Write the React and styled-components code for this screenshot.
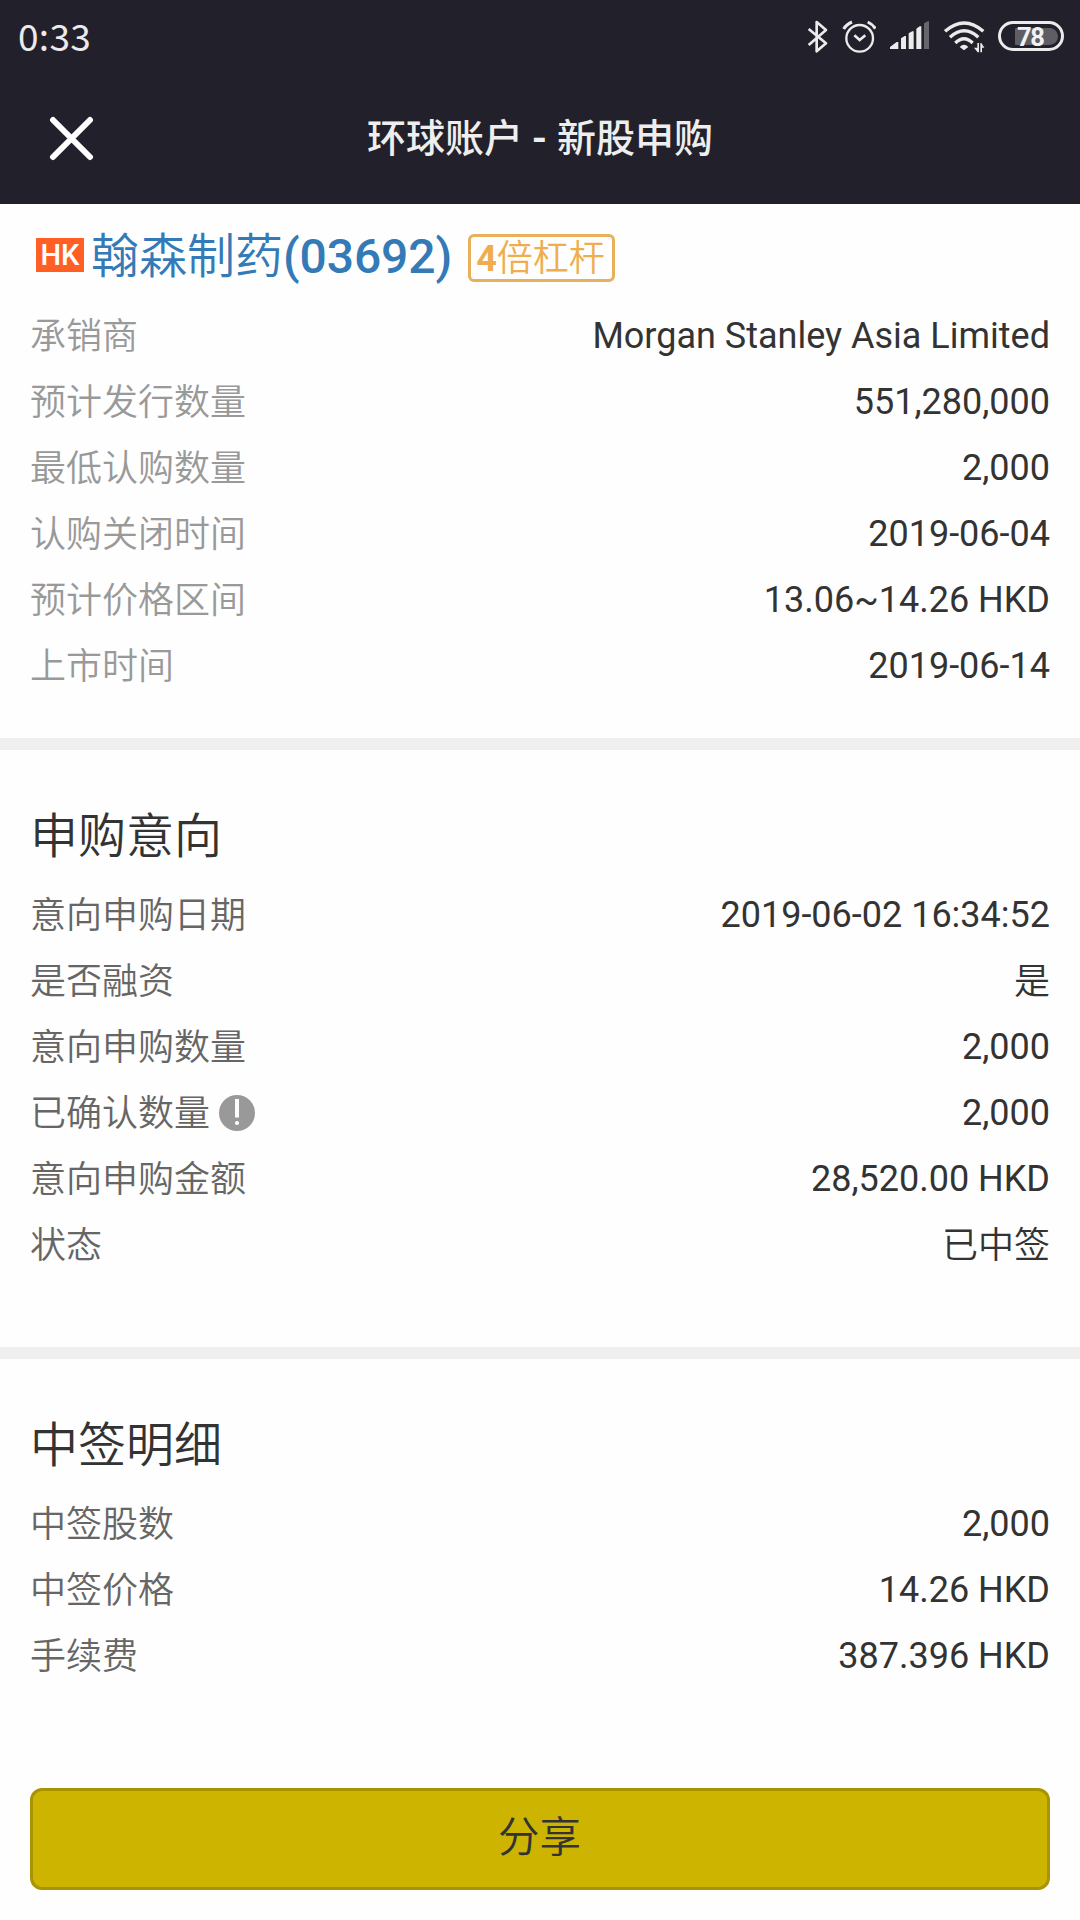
import React from "react";
import styled, { createGlobalStyle } from "styled-components";

const GlobalStyle = createGlobalStyle`
  body {
    margin: 0;
    background: #fefefe;
    font-family: Roboto, "Noto Sans CJK SC DemiLight", "Noto Sans CJK SC", sans-serif;
  }
  * { box-sizing: border-box; }
`;

const Screen = styled.div`
  width: 1080px;
  height: 1920px;
  display: flex;
  flex-direction: column;
  background: #fefefe;
  color: #333;
  overflow: hidden;
`;

const Header = styled.header`
  height: 204px;
  flex: none;
  background: #22212b;
`;

const StatusBar = styled.div`
  height: 72px;
  display: flex;
  justify-content: space-between;
  padding: 0 16px 0 18px;
`;

const Clock = styled.span`
  height: 72px;
  line-height: 71px;
  font-family: "Noto Sans CJK SC", sans-serif;
  font-size: 37px;
  letter-spacing: 0.3px;
  color: #ebebeb;
`;

const StatusIcons = styled.div`
  display: flex;
  align-items: flex-start;
  padding-top: 20px;
`;

const Glyph = styled.svg`
  display: block;
  width: ${(p) => p.$w}px;
  height: 34px;
  margin-right: ${(p) => p.$gap}px;
`;

const Battery = styled.div`
  width: 66px;
  height: 30px;
  margin-top: 1px;
  padding: 0 3px 0 14px;
  display: flex;
  align-items: center;
  border: 3px solid #ebebeb;
  border-radius: 15px;
`;

const Level = styled.div`
  width: 43px;
  height: 17px;
  padding-left: 2px;
  line-height: 18px;
  border-radius: 1px 9px 9px 1px;
  background: #5f5e65;
  color: #f2f2f2;
  font-size: 25.5px;
  font-weight: 700;
  letter-spacing: -1.5px;
`;

const TitleBar = styled.div`
  height: 132px;
  display: grid;
  grid-template-columns: 142px 1fr 142px;
  align-items: center;
`;

const Close = styled.button`
  height: 132px;
  padding: 0 0 0 49px;
  border: 0;
  background: none;
  display: flex;
  align-items: center;
`;

const Title = styled.h1`
  margin: 0;
  padding-bottom: 2px;
  text-align: center;
  font-family: "Noto Sans CJK SC", sans-serif;
  font-size: 39px;
  line-height: 60px;
  font-weight: 500;
  color: #eee;
`;

const Dash = styled.span`
  font-family: Roboto, sans-serif;
  font-weight: 700;
  margin: 0 1px 0 0;
`;

const Section = styled.section`
  height: ${(p) => p.$h}px;
  flex: none;
  padding: ${(p) => p.$top}px 30px 0;
  border-bottom: ${(p) => (p.$last ? "0" : "12px solid #efefef")};
`;

const Stock = styled.div`
  height: 74px;
  display: flex;
  align-items: center;
  margin-bottom: 8px;
  padding-left: 6px;
`;

const Market = styled.span`
  width: 48px;
  height: 34px;
  margin: 0 7px 6px 0;
  background: #ff5f24;
  color: #fff;
  font-size: 29px;
  font-weight: 500;
  line-height: 34px;
  text-align: center;
`;

const StockName = styled.a`
  color: #337ab7;
  font-size: 48px;
  line-height: 74px;
  margin-top: -2px;
  white-space: nowrap;
  font-weight: 350;
`;

const Code = styled.span`
  font-weight: 500;
  letter-spacing: -0.1px;
`;

const Leverage = styled.span`
  height: 48px;
  width: 147px;
  margin: 0 0 1px 16px;
  padding-left: 5px;
  border: 3px solid #e8b05c;
  border-radius: 6px;
  color: #f0ad4e;
  font-size: 36px;
  line-height: 44px;
  font-weight: 350;
  white-space: nowrap;
`;

const Times = styled.b`
  font-weight: 700;
`;

const Heading = styled.h2`
  margin: 0 0 12px;
  font-size: 48px;
  line-height: 66px;
  font-weight: 350;
  color: #333;
`;

const Row = styled.div`
  height: 66px;
  display: flex;
  justify-content: space-between;
  line-height: 66px;
  font-size: 36px;
`;

const Label = styled.span`
  display: flex;
  align-items: center;
  gap: 9px;
  color: ${(p) => (p.$muted ? "#999" : "#666")};
  font-weight: 350;
`;

const LabelText = styled.span`
  padding-top: 2px;
`;

const Value = styled.span`
  color: #333;
  font-weight: ${(p) => (p.$light ? 350 : 400)};
  line-height: ${(p) => (p.$light ? 68 : 66)}px;
`;

const ShareButton = styled.button`
  width: 1020px;
  height: 102px;
  flex: none;
  margin: 0 30px;
  padding: 0 1px 10px 0;
  border: 3px solid #a89400;
  border-radius: 12px;
  background: #ccb400;
  color: #333;
  font-family: inherit;
  font-size: 41.5px;
  font-weight: 350;
`;

const ink = "#ebebeb";

function BluetoothIcon() {
  return (
    <Glyph $w={22} $gap={13} viewBox="81 60 66 102">
      <path d="M86 87 L138 130 L110 154 V66 L138 90 L86 135" fill="none" stroke={ink} strokeWidth="8" strokeLinejoin="round" />
    </Glyph>
  );
}

function AlarmIcon() {
  return (
    <Glyph $w={34} $gap={13} viewBox="186 60 102 102">
      <g fill="none" stroke={ink}>
        <circle cx="239" cy="115" r="40" strokeWidth="7" />
        <path d="M191 87 Q199 73 216 66 M263 66 Q279 73 286 86" strokeWidth="9" />
        <path d="M223 106 L239 120 L256 106" strokeWidth="8" />
      </g>
    </Glyph>
  );
}

function SignalIcon() {
  return (
    <Glyph $w={40} $gap={14} viewBox="327 60 120 102">
      <path fill={ink} d="M330 147 V141 L350 126 H355 V147Z M363 147 V115 L374 108 H378 V147Z M386 147 V100 L397 94 H401 V147Z M409 147 V86 L419 79 H424 V147Z" />
      <path fill="#67666d" d="M432 147 V70 L443 64 H447 V147Z" />
    </Glyph>
  );
}

function WifiIcon() {
  return (
    <Glyph $w={42} $gap={13} viewBox="488 60 126 102">
      <g fill="none" stroke={ink} strokeWidth="10">
        <path d="M494 94 Q552 44 609 94" />
        <path d="M509 112 Q552 73 594 112" />
        <path d="M525 129 Q551 103 577 129" />
      </g>
      <path fill={ink} d="M538 141 Q551 128 564 141 L551 151Z" />
      <path fill={ink} d="M591 129 H596 V157 H592 L581 143 H591Z M600 157 V129 H603 L612 143 H605 V157Z" />
    </Glyph>
  );
}

function CloseIcon() {
  return (
    <svg width="45" height="45" viewBox="0 0 45 45">
      <path d="M4 4 L41 41 M41 4 L4 41" stroke="#fff" strokeWidth="6" strokeLinecap="round" />
    </svg>
  );
}

function NoticeIcon() {
  return (
    <svg width="36" height="36" viewBox="0 0 36 36">
      <circle cx="18" cy="18" r="18" fill="#999" />
      <path d="M16 4 H20 V22.5 H16Z" fill="#fefefe" />
      <circle cx="18" cy="28" r="2.1" fill="#fefefe" />
    </svg>
  );
}

const offering = [
  ["承销商", "Morgan Stanley Asia Limited"],
  ["预计发行数量", "551,280,000"],
  ["最低认购数量", "2,000"],
  ["认购关闭时间", "2019-06-04"],
  ["预计价格区间", "13.06~14.26 HKD"],
  ["上市时间", "2019-06-14"],
];

const intention = [
  ["意向申购日期", "2019-06-02 16:34:52"],
  ["是否融资", "是"],
  ["意向申购数量", "2,000"],
  ["已确认数量", "2,000", true],
  ["意向申购金额", "28,520.00 HKD"],
  ["状态", "已中签"],
];

const allotment = [
  ["中签股数", "2,000"],
  ["中签价格", "14.26 HKD"],
  ["手续费", "387.396 HKD"],
];

function Rows({ items, muted }) {
  return items.map(([label, value, notice]) => (
    <Row key={label}>
      <Label $muted={muted}>
        <LabelText>{label}</LabelText>
        {notice && <NoticeIcon />}
      </Label>
      <Value $light={!/[0-9A-Z]/.test(value)}>{value}</Value>
    </Row>
  ));
}

export default function App() {
  return (
    <Screen>
      <GlobalStyle />
      <Header>
        <StatusBar>
          <Clock>0:33</Clock>
          <StatusIcons>
            <BluetoothIcon />
            <AlarmIcon />
            <SignalIcon />
            <WifiIcon />
            <Battery>
              <Level>78</Level>
            </Battery>
          </StatusIcons>
        </StatusBar>
        <TitleBar>
          <Close aria-label="关闭">
            <CloseIcon />
          </Close>
          <Title>
            环球账户 <Dash>-</Dash> 新股申购
          </Title>
        </TitleBar>
      </Header>

      <Section $h={546} $top={17}>
        <Stock>
          <Market>HK</Market>
          <StockName>
            翰森制药<Code>(03692)</Code>
          </StockName>
          <Leverage>
            <Times>4</Times>倍杠杆
          </Leverage>
        </Stock>
        <Rows items={offering} muted />
      </Section>

      <Section $h={609} $top={54}>
        <Heading>申购意向</Heading>
        <Rows items={intention} />
      </Section>

      <Section $h={429} $top={54} $last>
        <Heading>中签明细</Heading>
        <Rows items={allotment} />
      </Section>

      <ShareButton>分享</ShareButton>
    </Screen>
  );
}
